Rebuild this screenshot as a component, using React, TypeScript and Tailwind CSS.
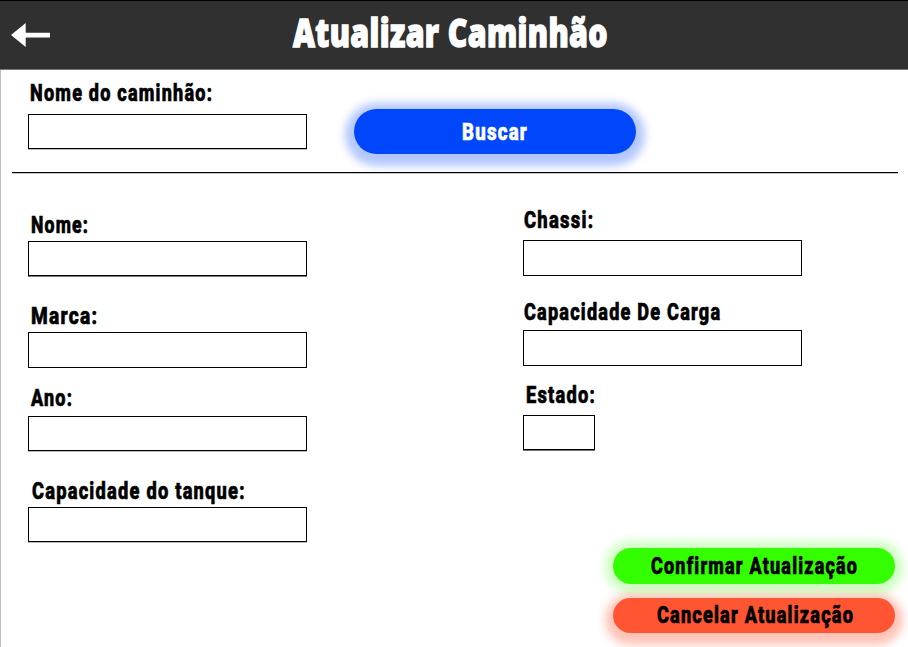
import { useLayoutEffect, useRef, useState } from "react";

type FitProps = { text: string; width: number; className?: string };

// Condensed lettering: the text is squeezed horizontally to the given width.
function FitText({ text, width, className = "" }: FitProps) {
  const ref = useRef<HTMLSpanElement>(null);
  const [scale, setScale] = useState(0.85);
  useLayoutEffect(() => {
    if (ref.current) setScale(width / ref.current.offsetWidth);
  }, [text, width]);
  return (
    <span className="block" style={{ width }}>
      <span
        ref={ref}
        className={`block w-max origin-left whitespace-nowrap ${className}`}
        style={{ transform: `scaleX(${scale})` }}
      >
        {text}
      </span>
    </span>
  );
}

const lettering = "font-['Roboto',sans-serif] text-[24px] leading-[24px] font-extrabold tracking-[1.6px] [-webkit-text-stroke:0.7px_currentColor]";

function Field({ label, width, labelClass, inputClass, className = "" }: {
  label: string; width: number; labelClass: string; inputClass: string; className?: string;
}) {
  return (
    <label className={`flex flex-col ${className}`}>
      <span className={labelClass}>
        <FitText text={label} width={width} className={lettering} />
      </span>
      <input className={`block rounded-none border border-black bg-white px-2 outline-none ${inputClass}`} />
    </label>
  );
}

export default function App() {
  return (
    <div className="flex h-[647px] w-[908px] flex-col overflow-hidden bg-white text-black">
      <header className="flex h-[70px] shrink-0 items-start border-t border-b border-t-black border-b-[#777777] bg-[#303030] text-white">
        <button className="mt-[22px] ml-[11px] h-6 w-[39px]" aria-label="Voltar">
          <svg viewBox="0 0 39 24" className="block h-6 w-[39px] fill-white">
            <path d="M0 12 14.7 0V9.7H39V14.4H14.7V24Z" />
          </svg>
        </button>
        <h1 className="mt-[11px] ml-[243px]">
          <FitText
            text="Atualizar Caminhão"
            width={315}
            className="font-['Open_Sans',sans-serif] text-[38px] leading-[40px] font-extrabold tracking-[0.5px] [-webkit-text-stroke:1.4px_currentColor]"
          />
        </h1>
      </header>

      <main className="flex grow flex-col border-l border-[#bdbdbd]">
        <section className="flex h-[102px] shrink-0 pl-[27px]">
          <Field label="Nome do caminhão:" width={183} className="pt-[11px]" labelClass="pl-[2px]" inputClass="mt-[9px] h-[35px] w-[279px] shadow-[0_1px_0_#bdbdbd]" />
          <button className="mt-[39px] ml-[47px] flex h-[45px] w-[282px] items-center justify-center rounded-full bg-[#0046fa] text-white shadow-[0_3px_9px_9px_rgba(0,70,250,0.3)]">
            <FitText text="Buscar" width={66} className={lettering} />
          </button>
        </section>
        <hr className="relative ml-[11px] h-px w-[886px] shrink-0 border-0 bg-black shadow-[0_1px_0_#c4c4c4]" />

        <section className="flex grow pl-[27px]">
          <form className="flex w-[495px] flex-col">
            <Field label="Nome:" width={58} className="pt-[40px]" labelClass="pl-[3px]" inputClass="mt-[4px] h-[35px] w-[279px] shadow-[0_1px_0_#777777]" />
            <Field label="Marca:" width={67} className="pt-[28px]" labelClass="pl-[3px]" inputClass="mt-[4px] h-[36px] w-[279px]" />
            <Field label="Ano:" width={42} className="pt-[18px]" labelClass="pl-[3px]" inputClass="mt-[6px] h-[35px] w-[279px] shadow-[0_1px_0_#bdbdbd]" />
            <Field label="Capacidade do tanque:" width={214} className="pt-[28px]" labelClass="pl-[4px]" inputClass="mt-[4px] h-[35px] w-[279px] shadow-[0_1px_0_#bdbdbd]" />
          </form>
          <div className="flex flex-col">
            <Field label="Chassi:" width={70} className="pt-[35px]" labelClass="pl-px" inputClass="mt-[8px] h-[36px] w-[279px]" />
            <Field label="Capacidade De Carga" width={197} className="pt-[24px]" labelClass="pl-px" inputClass="mt-[6px] h-[36px] w-[279px]" />
            <Field label="Estado:" width={70} className="pt-[17px]" labelClass="pl-[3px]" inputClass="mt-[8px] h-[35px] w-[72px] shadow-[0_1px_0_#777777]" />
            <div className="mt-[98px] ml-[90px] flex flex-col gap-[14px]">
              <button className="flex h-[35.5px] w-[282px] items-center justify-center rounded-full bg-[#33ff00] shadow-[0_1px_10px_8px_rgba(51,255,0,0.25)]">
                <FitText text="Confirmar Atualização" width={207} className={lettering} />
              </button>
              <button className="flex h-[35.5px] w-[282px] items-center justify-center rounded-full bg-[#ff5533] pl-[3px] shadow-[0_4px_9px_8px_rgba(255,85,51,0.35)]">
                <FitText text="Cancelar Atualização" width={197} className={lettering} />
              </button>
            </div>
          </div>
        </section>
      </main>
    </div>
  );
}
